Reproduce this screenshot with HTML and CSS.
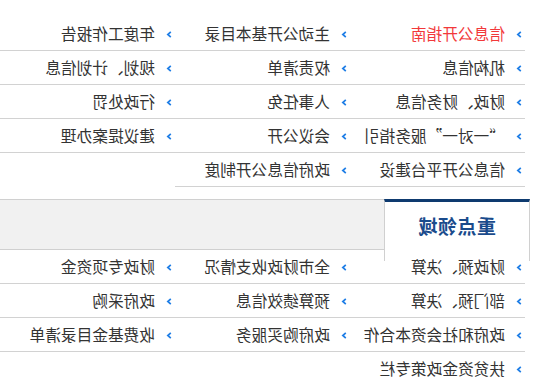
FILE: index.html
```html
<!DOCTYPE html>
<html lang="zh-CN">
<head>
<meta charset="utf-8">
<title>信息公开</title>
<link rel="stylesheet" href="styles.css">
</head>
<body>
<div class="page">
  <ul class="links top-links">
    <li><svg class="arr" viewBox="0 0 6 7"><polyline points="1.2,0.8 4.2,3.5 1.2,6.2"/></svg><a class="hot">信息公开指南</a></li>
    <li><svg class="arr" viewBox="0 0 6 7"><polyline points="1.2,0.8 4.2,3.5 1.2,6.2"/></svg><a>主动公开基本目录</a></li>
    <li><svg class="arr" viewBox="0 0 6 7"><polyline points="1.2,0.8 4.2,3.5 1.2,6.2"/></svg><a>年度工作报告</a></li>
    <li><svg class="arr" viewBox="0 0 6 7"><polyline points="1.2,0.8 4.2,3.5 1.2,6.2"/></svg><a>机构信息</a></li>
    <li><svg class="arr" viewBox="0 0 6 7"><polyline points="1.2,0.8 4.2,3.5 1.2,6.2"/></svg><a>权责清单</a></li>
    <li><svg class="arr" viewBox="0 0 6 7"><polyline points="1.2,0.8 4.2,3.5 1.2,6.2"/></svg><a>规划、计划信息</a></li>
    <li><svg class="arr" viewBox="0 0 6 7"><polyline points="1.2,0.8 4.2,3.5 1.2,6.2"/></svg><a>财政、财务信息</a></li>
    <li><svg class="arr" viewBox="0 0 6 7"><polyline points="1.2,0.8 4.2,3.5 1.2,6.2"/></svg><a>人事任免</a></li>
    <li><svg class="arr" viewBox="0 0 6 7"><polyline points="1.2,0.8 4.2,3.5 1.2,6.2"/></svg><a>行政处罚</a></li>
    <li><svg class="arr" viewBox="0 0 6 7"><polyline points="1.2,0.8 4.2,3.5 1.2,6.2"/></svg><a>“一对一”服务指引</a></li>
    <li><svg class="arr" viewBox="0 0 6 7"><polyline points="1.2,0.8 4.2,3.5 1.2,6.2"/></svg><a>会议公开</a></li>
    <li><svg class="arr" viewBox="0 0 6 7"><polyline points="1.2,0.8 4.2,3.5 1.2,6.2"/></svg><a>建议提案办理</a></li>
    <li><svg class="arr" viewBox="0 0 6 7"><polyline points="1.2,0.8 4.2,3.5 1.2,6.2"/></svg><a>信息公开平台建设</a></li>
    <li><svg class="arr" viewBox="0 0 6 7"><polyline points="1.2,0.8 4.2,3.5 1.2,6.2"/></svg><a>政府信息公开制度</a></li>
  </ul>

  <div class="tabbar">
    <div class="tab">重点领域</div>
  </div>

  <ul class="links bottom-links">
    <li><svg class="arr" viewBox="0 0 6 7"><polyline points="1.2,0.8 4.2,3.5 1.2,6.2"/></svg><a>财政预、决算</a></li>
    <li><svg class="arr" viewBox="0 0 6 7"><polyline points="1.2,0.8 4.2,3.5 1.2,6.2"/></svg><a>全市财政收支情况</a></li>
    <li><svg class="arr" viewBox="0 0 6 7"><polyline points="1.2,0.8 4.2,3.5 1.2,6.2"/></svg><a>财政专项资金</a></li>
    <li><svg class="arr" viewBox="0 0 6 7"><polyline points="1.2,0.8 4.2,3.5 1.2,6.2"/></svg><a>部门预、决算</a></li>
    <li><svg class="arr" viewBox="0 0 6 7"><polyline points="1.2,0.8 4.2,3.5 1.2,6.2"/></svg><a>预算绩效信息</a></li>
    <li><svg class="arr" viewBox="0 0 6 7"><polyline points="1.2,0.8 4.2,3.5 1.2,6.2"/></svg><a>政府采购</a></li>
    <li><svg class="arr" viewBox="0 0 6 7"><polyline points="1.2,0.8 4.2,3.5 1.2,6.2"/></svg><a>政府和社会资本合作</a></li>
    <li><svg class="arr" viewBox="0 0 6 7"><polyline points="1.2,0.8 4.2,3.5 1.2,6.2"/></svg><a>政府购买服务</a></li>
    <li><svg class="arr" viewBox="0 0 6 7"><polyline points="1.2,0.8 4.2,3.5 1.2,6.2"/></svg><a>收费基金目录清单</a></li>
    <li class="last"><svg class="arr" viewBox="0 0 6 7"><polyline points="1.2,0.8 4.2,3.5 1.2,6.2"/></svg><a>扶贫资金政策专栏</a></li>
  </ul>
</div>
</body>
</html>
```
FILE: styles.css
```css
html, body {
  margin: 0;
  padding: 0;
  background: #ffffff;
  overflow: hidden;
}

.page {
  width: 541px;
  height: 390px;
  transform: scaleX(-1);
  transform-origin: center center;
  font-family: "Noto Sans CJK SC", "Noto Sans", sans-serif;
  color: #333333;
}

.links {
  list-style: none;
  margin: 0 0 0 16px;
  padding: 0;
  width: 525px;
  display: grid;
  grid-template-columns: repeat(3, 175px);
}

.top-links {
  padding-top: 17px;
}

.links li {
  height: 33px;
  border-bottom: 1px solid #d2d2d2;
  display: flex;
  align-items: center;
  padding-left: 3px;
  font-size: 15.7px;
  line-height: 33px;
  white-space: nowrap;
}

.links li.last {
  border-bottom: none;
}

.arr {
  width: 6px;
  height: 7px;
  flex: none;
  margin-right: 11px;
  margin-top: 1px;
  fill: none;
  stroke: #1f7ee6;
  stroke-width: 1.7;
}

.links a {
  color: #333333;
  text-decoration: none;
}

.links a.hot {
  color: #f2383a;
}

.tabbar {
  margin: 12px 0 0 11px;
  width: 530px;
  height: 51px;
  box-sizing: border-box;
  background: #f1f1f1;
  border-top: 1px solid #d0d0d0;
  border-bottom: 1px solid #d0d0d0;
  display: flex;
  align-items: flex-start;
}

.tab {
  width: 146px;
  height: 62px;
  margin-top: -1px;
  box-sizing: border-box;
  background: #ffffff;
  border-top: 3px solid #0e3a6f;
  border-left: 1px solid #d0d0d0;
  border-right: 1px solid #d0d0d0;
  flex: none;
  color: #1a4b8c;
  font-size: 19px;
  font-weight: bold;
  text-align: center;
  line-height: 48px;
  letter-spacing: 0.5px;
}
```
